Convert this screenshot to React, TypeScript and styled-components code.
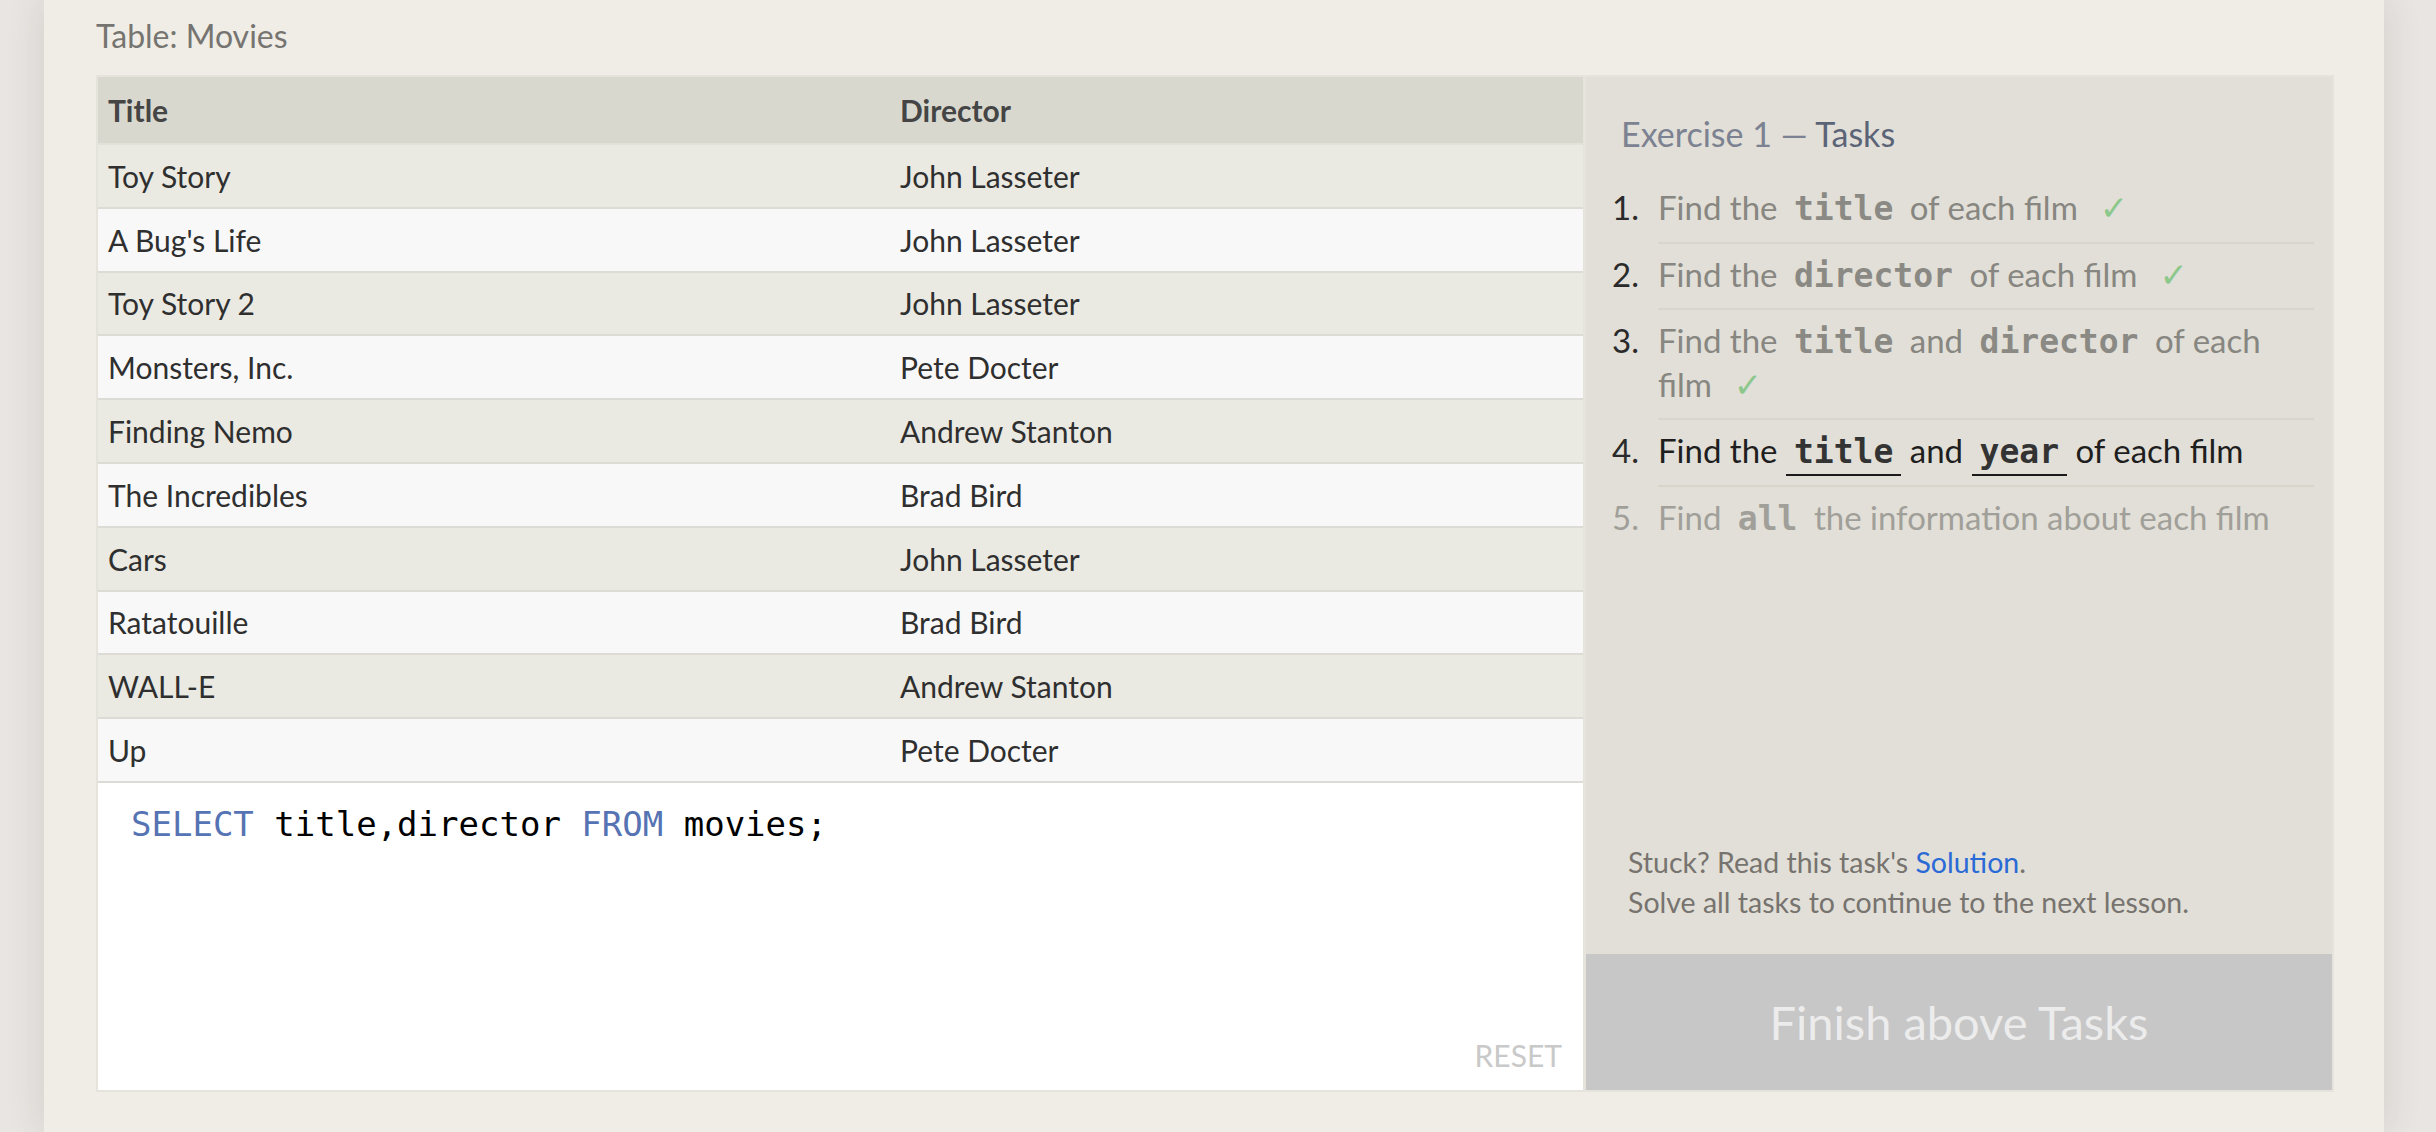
import React from 'react';
import styled, { createGlobalStyle } from 'styled-components';

const GlobalStyle = createGlobalStyle`
  html, body { margin: 0; padding: 0; background: #e8e5e2; }
  body { font-family: Lato, "Liberation Sans", sans-serif; }
  * { box-sizing: border-box; }
`;

const Page = styled.div`
  width: 2436px;
  height: 1132px;
  overflow: hidden;
  background: #e8e5e2;
`;

const Main = styled.main`
  margin-left: 44px;
  width: 2340px;
  height: 1132px;
  background: #f0ede6;
  padding: 17px 50px 0 52px;
  box-shadow: 0 0 36px rgba(80, 70, 60, 0.14);
`;

const Label = styled.div`
  font-size: 32px;
  line-height: 38px;
  color: #767470;
  margin-bottom: 20px;
`;

const Box = styled.section`
  display: flex;
  gap: 3px;
  height: 1017px;
  background: #e5e3dc;
  border: 2px solid #e5e3dc;
`;

const LeftCol = styled.div`
  width: 1485px;
  flex-shrink: 0;
  display: flex;
  flex-direction: column;
`;

const Table = styled.table`
  width: 100%;
  border-collapse: separate;
  border-spacing: 0;
  font-size: 30px;
`;

const HeadCell = styled.th<{ $w?: number }>`
  height: 68px;
  padding: 0 10px;
  text-align: left;
  font-weight: 700;
  color: #454545;
  background: #d9d8cf;
  border-bottom: 2px solid #e3e1da;
  width: ${(p) => (p.$w ? `${p.$w}px` : 'auto')};
`;

const Cell = styled.td<{ $odd: boolean }>`
  height: 63.8px;
  padding: 0 10px;
  color: #2f2f2f;
  background: ${(p) => (p.$odd ? '#eae9e2' : '#f8f8f8')};
  border-bottom: 2px solid #dcdbd5;
`;

const Editor = styled.div`
  flex: 1;
  position: relative;
  background: #fff;
  padding: 18px 33px;
  font-family: "DejaVu Sans Mono", "Liberation Mono", monospace;
  font-size: 34px;
  line-height: 47.6px;
  color: #000;
`;

const Kw = styled.span`
  color: #5673b3;
`;

const Reset = styled.span`
  position: absolute;
  right: 21px;
  bottom: 17px;
  font-size: 30px;
  line-height: 36px;
  color: #c9c9c9;
  font-family: Lato, "Liberation Sans", sans-serif;
`;

const RightCol = styled.div`
  flex: 1;
  display: flex;
  flex-direction: column;
`;

const Panel = styled.div`
  flex: 1;
  display: flex;
  flex-direction: column;
  background: #e1dfd7;
  padding: 35px 18px 0 35px;
`;

const Heading = styled.h3`
  margin: 0 0 21px;
  font-size: 34px;
  line-height: 44px;
  font-weight: 400;
  color: #7c8291;
`;

const HeadStrong = styled.span`
  color: #5b6477;
`;

const List = styled.ol`
  list-style: none;
  margin: 0 0 0 -9px;
  padding: 0;
  font-size: 33px;
`;

type State = 'done' | 'current' | 'todo';

const Item = styled.li`
  display: flex;
`;

const Num = styled.span<{ $state: State }>`
  width: 46px;
  flex-shrink: 0;
  padding-top: 9px;
  line-height: 43.5px;
  color: ${(p) => (p.$state === 'todo' ? '#a09f99' : '#2a2a2a')};
`;

const Body = styled.span<{ $state: State; $last?: boolean }>`
  flex: 1;
  padding: 9px 0 12px;
  line-height: 43.5px;
  border-bottom: ${(p) => (p.$last ? 'none' : '2px solid #d8d5cb')};
  color: ${(p) =>
    p.$state === 'current' ? '#1e1e1e' : p.$state === 'done' ? '#878681' : '#a19f99'};
`;

const Code = styled.code<{ $state: State }>`
  font-family: "DejaVu Sans Mono", "Liberation Mono", monospace;
  font-weight: 700;
  font-size: 33px;
  line-height: 1;
  padding: 0 8px 3px;
  color: ${(p) =>
    p.$state === 'current' ? '#333' : p.$state === 'done' ? '#8a8984' : '#a09f99'};
  border-bottom: ${(p) => (p.$state === 'current' ? '2px solid #1a1a1a' : 'none')};
`;

const Check = styled.span`
  font-family: "DejaVu Sans", sans-serif;
  font-size: 34px;
  line-height: 1;
  color: #8cc88c;
  margin-left: 22px;
`;

const Footer = styled.div`
  margin-top: auto;
  margin-left: 7px;
  padding-bottom: 32px;
  font-size: 28.5px;
  line-height: 40px;
  color: #77736f;
`;

const Link = styled.a`
  color: #2a6ad6;
  text-decoration: none;
`;

const Finish = styled.div`
  height: 136px;
  flex-shrink: 0;
  display: flex;
  align-items: center;
  justify-content: center;
  background: #c7c7c7;
  color: #ececec;
  font-size: 47px;
`;

const movies: [string, string][] = [
  ['Toy Story', 'John Lasseter'],
  ["A Bug's Life", 'John Lasseter'],
  ['Toy Story 2', 'John Lasseter'],
  ['Monsters, Inc.', 'Pete Docter'],
  ['Finding Nemo', 'Andrew Stanton'],
  ['The Incredibles', 'Brad Bird'],
  ['Cars', 'John Lasseter'],
  ['Ratatouille', 'Brad Bird'],
  ['WALL-E', 'Andrew Stanton'],
  ['Up', 'Pete Docter'],
];

export default function App() {
  return (
    <Page>
      <GlobalStyle />
      <Main>
        <Label>Table: Movies</Label>
        <Box>
          <LeftCol>
            <Table>
              <thead>
                <tr>
                  <HeadCell $w={792}>Title</HeadCell>
                  <HeadCell>Director</HeadCell>
                </tr>
              </thead>
              <tbody>
                {movies.map(([t, d], i) => (
                  <tr key={t}>
                    <Cell $odd={i % 2 === 0}>{t}</Cell>
                    <Cell $odd={i % 2 === 0}>{d}</Cell>
                  </tr>
                ))}
              </tbody>
            </Table>
            <Editor>
              <Kw>SELECT</Kw> title,director <Kw>FROM</Kw> movies;
              <Reset>RESET</Reset>
            </Editor>
          </LeftCol>
          <RightCol>
            <Panel>
              <Heading>
                Exercise 1 — <HeadStrong>Tasks</HeadStrong>
              </Heading>
              <List>
                <Item>
                  <Num $state="done">1.</Num>
                  <Body $state="done">
                    Find the <Code $state="done">title</Code> of each film<Check>✓</Check>
                  </Body>
                </Item>
                <Item>
                  <Num $state="done">2.</Num>
                  <Body $state="done">
                    Find the <Code $state="done">director</Code> of each film<Check>✓</Check>
                  </Body>
                </Item>
                <Item>
                  <Num $state="done">3.</Num>
                  <Body $state="done">
                    Find the <Code $state="done">title</Code> and <Code $state="done">director</Code> of each film
                    <Check>✓</Check>
                  </Body>
                </Item>
                <Item>
                  <Num $state="current">4.</Num>
                  <Body $state="current">
                    Find the <Code $state="current">title</Code> and <Code $state="current">year</Code> of each film
                  </Body>
                </Item>
                <Item>
                  <Num $state="todo">5.</Num>
                  <Body $state="todo" $last>
                    Find <Code $state="todo">all</Code> the information about each film
                  </Body>
                </Item>
              </List>
              <Footer>
                Stuck? Read this task's <Link href="#">Solution</Link>.
                <br />
                Solve all tasks to continue to the next lesson.
              </Footer>
            </Panel>
            <Finish>Finish above Tasks</Finish>
          </RightCol>
        </Box>
      </Main>
    </Page>
  );
}
